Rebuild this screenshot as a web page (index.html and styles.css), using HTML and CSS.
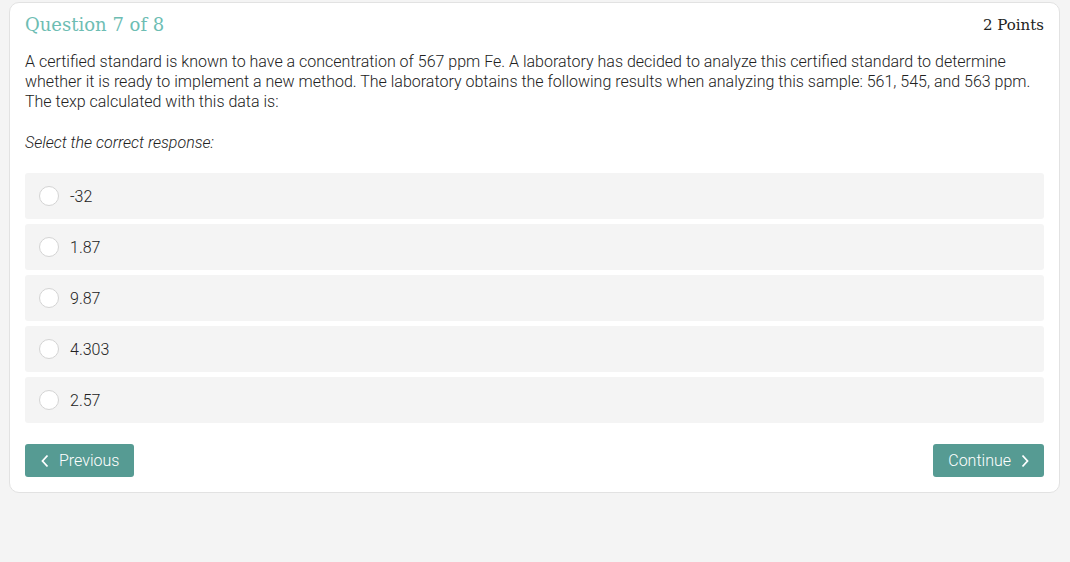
FILE: index.html
```html
<!DOCTYPE html>
<html lang="en">
<head>
<meta charset="utf-8">
<title>Question 7 of 8</title>
<link rel="stylesheet" href="styles.css">
</head>
<body>
<div class="card">
  <div class="header">
    <h1 class="title">Question 7 of 8</h1>
    <span class="points">2 Points</span>
  </div>
  <p class="question">A certified standard is known to have a concentration of 567 ppm Fe. A laboratory has decided to analyze this certified standard to determine whether it is ready to implement a new method. The laboratory obtains the following results when analyzing this sample: 561, 545, and 563 ppm. The texp calculated with this data is:</p>
  <p class="prompt">Select the correct response:</p>
  <div class="options">
    <label class="option"><span class="radio"></span><span class="label">-32</span></label>
    <label class="option"><span class="radio"></span><span class="label">1.87</span></label>
    <label class="option"><span class="radio"></span><span class="label">9.87</span></label>
    <label class="option"><span class="radio"></span><span class="label">4.303</span></label>
    <label class="option"><span class="radio"></span><span class="label">2.57</span></label>
  </div>
  <div class="nav">
    <button class="btn btn-prev"><svg width="8" height="14" viewBox="0 0 8 14"><path d="M6.5 1.5 L1.5 7 L6.5 12.5" fill="none" stroke="#fff" stroke-width="1.8"/></svg><span>Previous</span></button>
    <button class="btn btn-next"><span>Continue</span><svg width="8" height="14" viewBox="0 0 8 14"><path d="M1.5 1.5 L6.5 7 L1.5 12.5" fill="none" stroke="#fff" stroke-width="1.8"/></svg></button>
  </div>
</div>
</body>
</html>
```

FILE: styles.css
```css
html, body {
  margin: 0;
  padding: 0;
}
body {
  background: #f4f4f4;
  font-family: Roboto, "Liberation Sans", sans-serif;
  font-weight: 300;
  color: #222;
  padding: 2px 10px 0 9px;
  height: 562px;
  box-sizing: border-box;
}
.card {
  background: #fff;
  border: 1px solid #e2e2e2;
  border-radius: 10px;
  padding: 8px 15px 15px;
}
.header {
  display: flex;
  justify-content: space-between;
  align-items: center;
  height: 28px;
}
.title {
  margin: 0;
  font-family: "DejaVu Serif", serif;
  font-weight: normal;
  font-size: 18px;
  color: #6dbdb3;
  line-height: 28px;
}
.points {
  font-family: "DejaVu Serif", serif;
  font-size: 15px;
  color: #222;
  font-weight: normal;
}
.question {
  margin: 13px 0 0;
  font-size: 16px;
  line-height: 20px;
}
.prompt {
  margin: 21px 0 0;
  font-size: 16px;
  line-height: 20px;
  font-style: italic;
}
.options {
  margin-top: 20px;
  display: flex;
  flex-direction: column;
  gap: 5px;
}
.option {
  display: flex;
  align-items: center;
  height: 46px;
  background: #f4f4f4;
  border-radius: 3px;
  padding-left: 14px;
  font-size: 16px;
}
.radio {
  width: 18px;
  height: 18px;
  border: 1px solid #d4d4d4;
  border-radius: 50%;
  background: #fff;
  margin-right: 11px;
  flex: none;
}
.nav {
  display: flex;
  justify-content: space-between;
  margin-top: 21px;
}
.btn {
  display: flex;
  align-items: center;
  gap: 10px;
  height: 33px;
  border: none;
  border-radius: 3px;
  background: #569b93;
  color: #fff;
  font-family: Roboto, "Liberation Sans", sans-serif;
  font-weight: 300;
  font-size: 16px;
  padding: 0 15px 0 16px;
}
.btn-next {
  padding: 0 15px 0 15px;
  gap: 10px;
}
```
